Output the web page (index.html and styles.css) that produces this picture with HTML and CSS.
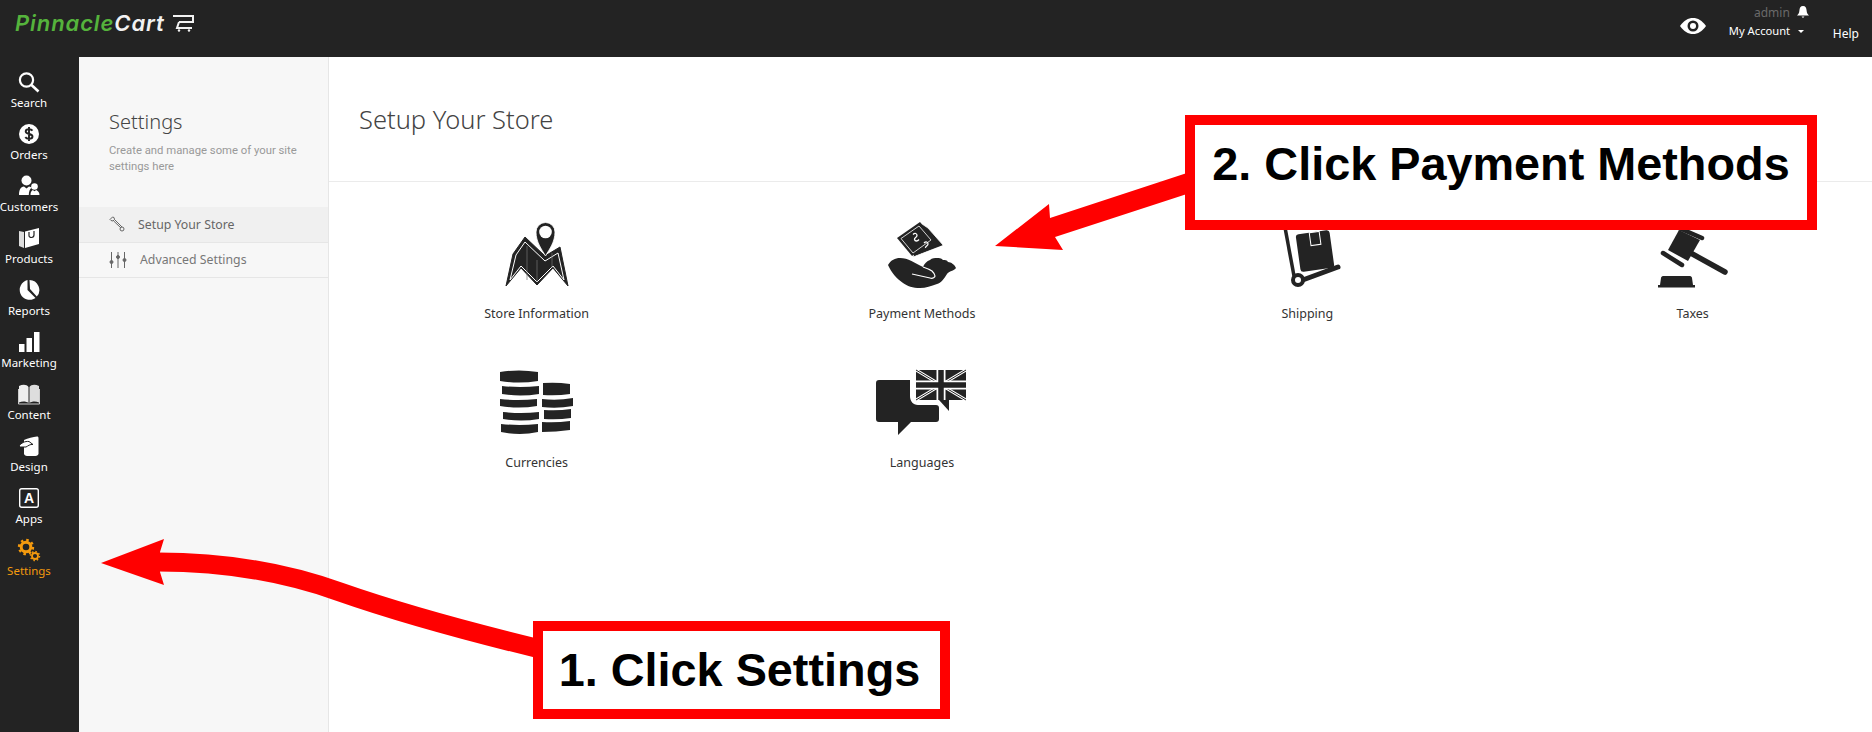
FILE: index.html
```html
<!DOCTYPE html>
<html lang="en">
<head>
    <meta charset="UTF-8">
    <meta name="viewport" content="width=device-width, initial-scale=1.0">
    <title>Setup Your Store</title>
    <link rel="stylesheet" href="styles.css">
</head>
<body>
    <header class="topbar">
        <div class="logo">
            <span class="logo-green">Pinnacle</span><span class="logo-white">Cart</span>
            <svg class="logo-cart" viewBox="0 0 24 18" width="24" height="18" fill="none" stroke="#f2f2f2" stroke-width="2">
                <path d="M2 2h20v6H8M12 2H7M8 8l-2 6h15"/>
                <circle cx="8" cy="16.5" r="1.2" fill="#f2f2f2" stroke="none"/>
                <circle cx="18" cy="16.5" r="1.2" fill="#f2f2f2" stroke="none"/>
            </svg>
        </div>
        <div class="top-right">
            <svg class="eye" viewBox="0 0 26 16" width="26" height="16">
                <path d="M0 8C4 2.5 8 0 13 0s9 2.5 13 8c-4 5.500-8 8-13 8S4 13.500 0 8z" fill="#fff"/>
                <circle cx="13" cy="8" r="5.500" fill="#232323"/>
                <circle cx="13" cy="8" r="3" fill="#fff"/>
            </svg>
            <div class="account">
                <div class="account-name">admin
                    <svg viewBox="0 0 12 12" width="12" height="12"><path d="M6 0c2.600 0 3.400 2 3.600 4.500.2 2.500 1 3.800 2.400 5H0c1.400-1.200 2.200-2.500 2.400-5C2.600 2 3.400 0 6 0zM4.500 10.500h3L6 12z" fill="#fff"/></svg>
                </div>
                <div class="account-menu">My Account <span class="caret"></span></div>
            </div>
            <div class="help">Help</div>
        </div>
    </header>

    <div class="layout">
        <!-- Main nav -->
        <nav class="sidebar">
            <a class="nav-item">
                <svg viewBox="0 0 24 24" fill="none" stroke="#fff" stroke-width="2.200"><circle cx="9.500" cy="10" r="6.600"/><path d="M14.500 15l7 6.500" stroke-width="2.600"/></svg>
                Search
            </a>
            <a class="nav-item">
                <svg viewBox="0 0 24 24"><circle cx="12" cy="12" r="10" fill="#fff"/><path d="M15.500 8.700c-.8-1-2-1.400-3.500-1.400-2 0-3.300.9-3.300 2.300 0 3.100 6.800 1.700 6.800 4.800 0 1.400-1.400 2.300-3.500 2.300-1.500 0-2.900-.5-3.700-1.600M12 5v14" fill="none" stroke="#232323" stroke-width="1.900"/></svg>
                Orders
            </a>
            <a class="nav-item">
                <svg viewBox="0 0 24 24" fill="#fff"><circle cx="9.500" cy="6.500" r="5"/><path d="M2 21c0-5 1.500-8 5-8.500l2.500 2 2.500-2c1.200.2 2 .6 2.800 1.300-2 1.200-3 3.500-3 7.200z"/><circle cx="17.500" cy="12.500" r="3.300"/><path d="M13.500 21c0-2.800.9-4.400 2.300-5l1.700 1.300 1.700-1.300c1.500.6 3.300 2.200 3.300 5z"/></svg>
                Customers
            </a>
            <a class="nav-item">
                <svg viewBox="0 0 24 24"><path d="M2 5l5 1v16l-5-2z" fill="#ddd"/><path d="M8 5.500L22 2v16L8 22z" fill="#fff"/><path d="M12 6v3.500c0 3 5 2.500 5-.5V5" fill="none" stroke="#232323" stroke-width="1.200"/></svg>
                Products
            </a>
            <a class="nav-item">
                <svg viewBox="0 0 24 24" fill="#fff"><path d="M10.500 2.100A10 10 0 1 0 18.500 20l-8-8z"/><path d="M12.500 2a10 10 0 0 1 7.300 16.600L13 11z"/></svg>
                Reports
            </a>
            <a class="nav-item">
                <svg viewBox="0 0 24 24" fill="#fff"><rect x="2" y="14" width="5.500" height="8"/><rect x="9.500" y="8" width="5.500" height="14"/><rect x="17" y="2" width="5.500" height="20"/></svg>
                Marketing
            </a>
            <a class="nav-item">
                <svg viewBox="0 0 24 24"><path d="M2 4c4-2 8-1.500 9.500 1v16c-2-1.500-6-2-9.500-.5z" fill="#eee"/><path d="M22 4c-4-2-8-1.500-9.500 1v16c2-1.500 6-2 9.500-.5z" fill="#ddd"/><path d="M1.500 7v15h21V7" fill="none" stroke="#ccc" stroke-width="1"/></svg>
                Content
            </a>
            <a class="nav-item">
                <svg viewBox="0 0 24 24"><path d="M7 6c4-2 9-3 13-3.500 1 0 1.500.5 1.500 2v15c0 1.500-1.500 2.500-3 2.500H10c-1.500 0-3-1-3-2.500z" fill="#fff"/><path d="M2 12c2-3 6-5 10-4.500l4 3c-3-.5-5 1.500-7 2.500H3z" fill="#fff" stroke="#232323" stroke-width="1"/></svg>
                Design
            </a>
            <a class="nav-item">
                <svg viewBox="0 0 24 24"><rect x="2.700" y="2.700" width="18.600" height="18.600" rx="2" fill="#232323" stroke="#fff" stroke-width="1.400"/><text x="12" y="17" class="app-letter">A</text></svg>
                Apps
            </a>
            <a class="nav-item nav-active">
                <svg viewBox="0 0 24 24" fill="none" stroke="#f49a0e"><circle cx="9" cy="9" r="4.800" stroke-width="3"/><circle cx="9" cy="9" r="7" stroke-width="2.400" stroke-dasharray="2.500 3"/><circle cx="18" cy="18" r="3" stroke-width="1.800"/><circle cx="18" cy="18" r="4.500" stroke-width="1.500" stroke-dasharray="1.500 2"/></svg>
                Settings
            </a>
        </nav>

        <!-- Settings menu -->
        <aside class="subnav">
            <h2>Settings</h2>
            <p>Create and manage some of your site settings here</p>
            <ul>
                <li class="active">
                    <svg viewBox="0 0 16 16" width="16" height="16" fill="none" stroke="#666"><path d="M1 3.500L3.500 1l1.500.5.500 2L4 5l-2-.5zM4.500 4.800l7.500 7.200M5.500 3.500L13 11"/><circle cx="13" cy="13" r="2"/></svg>
                    Setup Your Store
                </li>
                <li>
                    <svg viewBox="0 0 18 16" width="18" height="16" fill="none" stroke="#666"><path d="M2.500 0v16M9 0v16M15.500 0v16"/><circle cx="2.500" cy="10" r="1.500" fill="#666"/><circle cx="9" cy="5" r="1.500" fill="#666"/><circle cx="15.500" cy="8" r="1.500" fill="#666"/></svg>
                    Advanced Settings
                </li>
            </ul>
        </aside>

        <main class="content">
            <h1 class="page-title">Setup Your Store</h1>
            <div class="tiles">
                <a class="tile">
                    <svg viewBox="0 0 100 70">
                        <path d="M19 66l7-32 12-17 20 19 15-9 8 39-15-18-16 17-16-17z" fill="#232323" stroke="#232323"/>
                        <path d="M23 60l6-25 9-13 20 19 13-8 6 27-11-14-16 16-16-16z" fill="none" stroke="#fff" stroke-width="1"/>
                        <path d="M40 26v34M50 40v22M65 33v15" stroke="#777" stroke-width=".7"/>
                        <path d="M58.500 36c-4-7-9.500-14-9.500-24a9.500 9.500 0 0 1 19 0c0 10-5.500 17-9.500 24z" fill="#232323" stroke="#fff" stroke-width=".8"/>
                        <circle cx="58.500" cy="12" r="6.300" fill="#fff"/>
                    </svg>
                    Store Information
                </a>
                <a class="tile">
                    <svg viewBox="0 0 100 70">
                        <path d="M50 4l6 4 15 17-30 12z" fill="#232323" stroke="#fff" stroke-width=".8"/>
                        <path d="M50 6l19 19-27 10" fill="none" stroke="#232323" stroke-width="1.600"/>
                        <path d="M25 18L48 2l15 18-23 16z" fill="#232323"/>
                        <path d="M29 18.500l18-12.500 12 14-18 13z" fill="none" stroke="#fff" stroke-width=".8"/>
                        <path d="M41 14.500c2-2 4-1 4 1s-3 2-2.500 4 3 2 4.500 0M52 23c2-2 4-1 4 1s-3 2-2.500 4" fill="none" stroke="#fff" stroke-width="1.300"/>
                        <path d="M16 45c3-5 7-7 12-7 8 0 15 5 23 9 1-3 4-6 7-7 2-2 5-2 7-2 2 0 4 0 6 2 2 0 4 0 5 2 3 0 7 3 8 6-2 3-7 3-9 6-3 5-6 9-10 10-6 2-11 4-17 4-7 0-13-2-17-5-6-4-12-11-15-18z" fill="#232323"/>
                        <path d="M40 54l18 4c3 1 5-1 5-2 0-2-2-4-3-5-3-2-6-3-9-4" fill="none" stroke="#fff" stroke-width="1.200"/>
                    </svg>
                    Payment Methods
                </a>
                <a class="tile">
                    <svg viewBox="0 0 100 70">
                        <path d="M27 2l10 54" stroke="#232323" stroke-width="3.500"/>
                        <rect x="41" y="12" width="34" height="38" rx="3" transform="rotate(-8 58 31)" fill="#232323"/>
                        <rect x="53" y="12" width="10" height="13" transform="rotate(-8 58 18)" fill="#232323" stroke="#fff"/>
                        <path d="M43 61l38-14" stroke="#232323" stroke-width="5" stroke-linecap="round"/>
                        <circle cx="41" cy="60" r="5" fill="#fff" stroke="#232323" stroke-width="4"/>
                    </svg>
                    Shipping
                </a>
                <a class="tile">
                    <svg viewBox="0 0 100 70">
                        <path d="M44 31l38 21" stroke="#232323" stroke-width="5.500" stroke-linecap="round"/>
                        <path d="M25 30L36 10l21 10-12 21z" fill="#232323"/>
                        <path d="M20 33l19 12M36 8l23 10" stroke="#232323" stroke-width="4.500" stroke-linecap="round"/>
                        <path d="M17 65l1-7c0-1 1-2 2-2h27c1 0 2 1 2 2l1 7z" fill="#232323"/>
                        <rect x="15" y="65" width="37" height="2.500" fill="#232323"/>
                    </svg>
                    Taxes
                </a>
                <a class="tile">
                    <svg viewBox="0 0 100 70" fill="#232323">
                        <path d="M13 3q19-3 38 0v9q-19 3-38 0z"/>
                        <path d="M15 17q18 2 37 0v8q-19 3-37 0z"/>
                        <path d="M13 30q18 2 37 0v7q-18 3-37 0z"/>
                        <path d="M16 43q18 2 36 0v7q-18 3-36 0z"/>
                        <path d="M14 55q18 2 37 0v8q-18 4-37 0z"/>
                        <path d="M56 14q14-1 27 1v10q-13 2-27 1z"/>
                        <path d="M55 30q15 2 31-1v8q-16 3-31 1z"/>
                        <path d="M57 41q14 1 27-1v9q-13 2-27 1z"/>
                        <path d="M55 53q14 1 28-1v9q-14 2-28 2z"/>
                    </svg>
                    Currencies
                </a>
                <a class="tile">
                    <svg viewBox="0 0 100 70">
                        <path d="M7 11h31v16c0 5 3 9 8 9h18c2 0 3 1 3 3v11c0 2-1 3-3 3H39L26 66V53H7c-2 0-3-1-3-3V14c0-2 1-3 3-3z" fill="#232323"/>
                        <rect x="44" y="1" width="50" height="30" fill="#232323"/>
                        <path d="M44 1l50 30M94 1L44 31" stroke="#fff" stroke-width="3"/>
                        <path d="M44 1l50 30M94 1L44 31" stroke="#232323" stroke-width="1"/>
                        <path d="M69 1v30M44 16h50" stroke="#fff" stroke-width="9"/>
                        <path d="M69 1v30M44 16h50" stroke="#232323" stroke-width="5.500"/>
                        <path d="M67 31h10v11z" fill="#232323"/>
                    </svg>
                    Languages
                </a>
            </div>
        </main>
    </div>

    <!-- Tutorial annotations drawn over the screenshot -->
    <svg class="arrows" viewBox="0 0 1872 732">
        <path d="M101 563L164 539 160 552 160 572 164 585z"/>
        <path class="arrow-line" d="M158 562C230 562 290 574 340 592 400 613 470 632 540 649"/>
        <path d="M995 246L1049 204 1050 218 1190 172V193L1055 237 1063 250z"/>
    </svg>
    <div class="callout callout-one">1. Click Settings</div>
    <div class="callout callout-two">2. Click Payment Methods</div>
</body>
</html>
```

FILE: styles.css
```css
* {
    box-sizing: border-box;
}
body {
    font-family: "Noto Sans", "Open Sans", sans-serif;
    margin: 0;
    width: 1872px;
    height: 732px;
    overflow: hidden;
    position: relative;
    background-color: #fff;
    color: #333;
}

/* Top bar */
.topbar {
    height: 57px;
    background-color: #232323;
    display: flex;
    justify-content: space-between;
    color: #fff;
}
.logo {
    display: flex;
    align-items: center;
    height: 46px;
    padding-left: 15px;
    font-family: Inter, sans-serif;
    font-style: italic;
    font-size: 22px;
    font-weight: 600;
    letter-spacing: .9px;
}
.logo-green {
    color: #55b33c;
}
.logo-white {
    color: #f2f2f2;
}
.logo-cart {
    margin-left: 6px;
}
.top-right {
    display: flex;
    padding-right: 13px;
}
.eye {
    margin: 18px 23px 0 0;
}
.account {
    width: 80px;
    font-size: 12px;
    margin-right: 24px;
}
.account-name {
    display: flex;
    justify-content: flex-end;
    align-items: center;
    gap: 7px;
    height: 16px;
    margin-top: 4px;
    color: #6a6a6a;
}
.account-menu {
    margin-top: 3px;
    font-size: 11.200px;
    line-height: 16px;
}
.caret {
    display: inline-block;
    border: 3.5px solid transparent;
    border-top-color: #fff;
    border-bottom: 0;
    margin: 0 0 2px 5px;
}
.help {
    font-size: 12px;
    margin-top: 25px;
}

.layout {
    display: flex;
    height: 675px;
}

/* Main nav */
.sidebar {
    width: 79px;
    flex: none;
    background-color: #232323;
    padding-top: 13px;
    padding-right: 21px;
}
.nav-item {
    display: flex;
    flex-direction: column;
    align-items: center;
    height: 52px;
    font-size: 11.500px;
    line-height: 16px;
    color: #fff;
    white-space: nowrap;
}
.nav-item svg {
    width: 24px;
    height: 24px;
    flex: none;
    margin-bottom: 1px;
}
.nav-active {
    color: #f49a0e;
}
.app-letter {
    font-family: "Liberation Sans", sans-serif;
    font-weight: 700;
    font-size: 14px;
    text-anchor: middle;
    fill: #fff;
}

/* Settings menu */
.subnav {
    width: 250px;
    flex: none;
    background-color: #f7f7f7;
    border-right: 1px solid #e6e6e6;
    padding-top: 52px;
}
.subnav h2 {
    margin: 0 0 0 30px;
    font-size: 20px;
    line-height: 26px;
    font-weight: 300;
    color: #444;
}
.subnav p {
    margin: 8px 25px 0 30px;
    font-family: Roboto, sans-serif;
    font-size: 11.300px;
    line-height: 16px;
    color: #999;
}
.subnav ul {
    list-style: none;
    margin: 32px 0 0;
    padding: 0;
}
.subnav li {
    display: flex;
    align-items: center;
    gap: 13px;
    height: 35px;
    padding: 0 0 1px 30px;
    font-size: 12.300px;
    color: #777;
    border-bottom: 1px solid #e6e6e6;
}
.subnav li.active {
    height: 36px;
    background-color: #f0f0f0;
    color: #666;
}

/* Content */
.content {
    flex: 1;
    min-width: 0;
    overflow: hidden;
}
.page-title {
    margin: 0;
    height: 125px;
    padding: 45px 0 0 30px;
    font-size: 25.500px;
    line-height: 34px;
    font-weight: 300;
    color: #444;
    border-bottom: 1px solid #ebebeb;
}
.tiles {
    display: grid;
    grid-template-columns: repeat(4, 385.330px);
    row-gap: 45px;
    padding: 38px 0 0 15px;
}
.tile {
    display: flex;
    flex-direction: column;
    align-items: center;
    font-size: 12.500px;
    line-height: 20px;
    color: #333;
}
.tile svg {
    width: 100px;
    height: 70px;
    margin-bottom: 14px;
    overflow: visible;
}

/* Annotations */
.arrows {
    position: absolute;
    top: 0;
    left: 0;
    width: 1872px;
    height: 732px;
    fill: #f00;
}
.arrow-line {
    fill: none;
    stroke: #f00;
    stroke-width: 19px;
}
.callout {
    position: absolute;
    background-color: #fff;
    border: 10px solid #f00;
    color: #000;
    font-family: "Liberation Sans", Arial, sans-serif;
    font-weight: 700;
    font-size: 46.800px;
    text-align: center;
    white-space: nowrap;
}
.callout-one {
    left: 533px;
    top: 621px;
    width: 417px;
    height: 98px;
    padding-right: 4px;
    line-height: 79px;
}
.callout-two {
    left: 1185px;
    top: 115px;
    width: 632px;
    height: 115px;
    line-height: 79px;
}
```
